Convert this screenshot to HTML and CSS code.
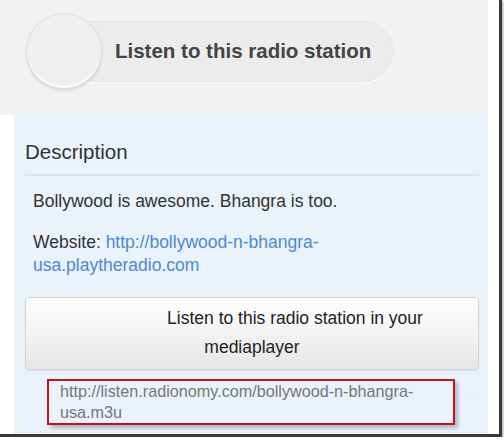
FILE: index.html
```html
<!DOCTYPE html>
<html lang="en">
<head>
    <meta charset="UTF-8">
    <meta name="viewport" content="width=device-width, initial-scale=1.0">
    <title>Listen to this radio station</title>
    <link rel="stylesheet" href="styles.css">
</head>
<body>
    <div class="shot">
        <div class="header">
            <div class="listen-pill">
                <span class="knob"></span>
                <span class="listen-label">Listen to this radio station</span>
            </div>
        </div>

        <div class="content">
            <h2 class="title">Description</h2>
            <div class="description">
                <p>Bollywood is awesome. Bhangra is too.</p>
                <p>Website: <a href="#">http://bollywood-n-bhangra-usa.playtheradio.com</a></p>
            </div>

            <button class="player-button">Listen to this radio station in your mediaplayer</button>

            <div class="stream-row">
                <div class="stream-url">http://listen.radionomy.com/bollywood-n-bhangra-usa.m3u</div>
                <span class="dots">····</span>
            </div>
        </div>
    </div>
</body>
</html>
```

FILE: styles.css
```css
body { margin: 0; background: #fff; font-family: "Liberation Sans", Arial, sans-serif; color: #333; }

.shot { width: 499px; height: 434px; background: #fff; border-right: 3px solid #3a3a3a; border-bottom: 3px solid #3a3a3a; box-shadow: 1px 1px 2px rgba(0,0,0,0.4); overflow: hidden; display: flex; flex-direction: column; }

.header { width: 488px; height: 115px; flex: none; background: #f2f2f2; padding: 21px 0 0 28px; box-sizing: border-box; }
.listen-pill { position: relative; width: 366px; height: 61px; box-sizing: border-box; border-radius: 31px; background: #ececec; border: 1px solid #e6e6e6; box-shadow: 0 1px 0 #fff; display: flex; align-items: center; padding-left: 86px; }
.knob { position: absolute; left: -3px; top: -9px; width: 74px; height: 74px; border-radius: 50%; background: #efefef; border: 1px solid #dedede; box-shadow: 0 2px 3px rgba(0,0,0,0.12), inset 0 -2px 0 #fff; }
.listen-label { font-size: 20.5px; font-weight: bold; color: #444; margin-top: -2px; }

.content { flex: 1; width: 474px; margin-left: 14px; background: #eaf2fb; padding: 25px 9px 0 11px; box-sizing: border-box; }
.title { margin: 0; font-size: 20.5px; font-weight: normal; line-height: 24px; color: #333; padding-bottom: 10px; border-bottom: 2px solid #dde3ea; }

.description { padding: 14px 0 0 8px; font-size: 17.5px; line-height: 23px; }
.description p { margin: 0 0 18px; }
.description a { color: #4a8ad4; text-decoration: none; }

.player-button { display: block; width: 100%; margin-top: 20px; padding: 6px 30px 7px; font-family: inherit; font-size: 17.5px; line-height: 29px; color: #222; text-align: center; text-indent: 86px; background: linear-gradient(#ffffff, #e6e6e6); border: 1px solid #d2d2d2; border-radius: 4px; box-shadow: 0 1px 1px rgba(0,0,0,0.08); }

.stream-row { display: flex; align-items: flex-start; margin: 9px 0 0 22px; }
.stream-url { width: 408px; box-sizing: border-box; border: 2px solid #c8121b; padding: 0 20px 0 11px; font-size: 16.2px; line-height: 21px; color: #777; box-shadow: 3px 3px 4px rgba(0,0,0,0.25); }
.dots { margin: 12px 0 0 12px; font-size: 9px; line-height: 10px; color: #d8dde3; }
```
